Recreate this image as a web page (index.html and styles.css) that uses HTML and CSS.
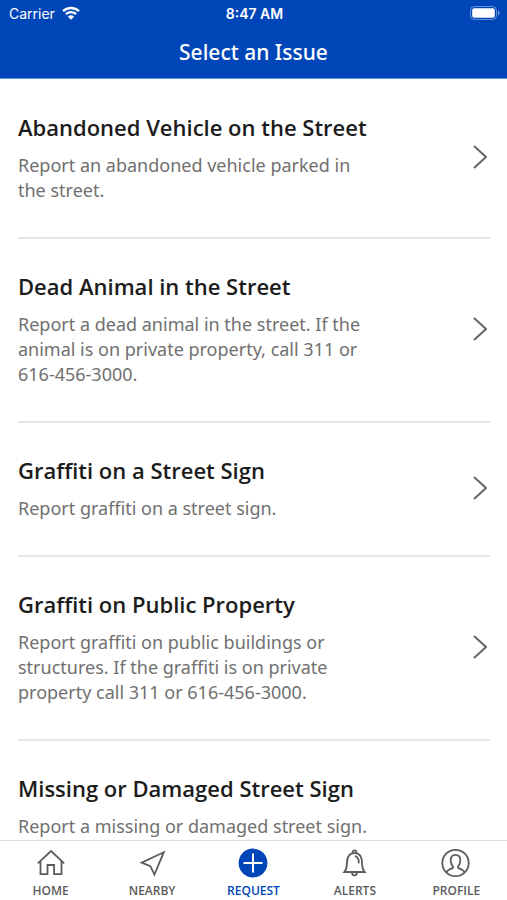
FILE: index.html
```html
<!DOCTYPE html>
<html lang="en">
<head>
<meta charset="utf-8">
<meta name="viewport" content="width=device-width, initial-scale=1">
<title>Select an Issue</title>
<link rel="stylesheet" href="styles.css">
</head>
<body>
<header class="header">
  <div class="status">
    <div class="status-carrier">
      <span>Carrier</span>
      <svg class="wifi" viewBox="0 0 18 14" aria-hidden="true">
        <path d="M1 5.2a11.6 11.6 0 0 1 16 0M3.9 8.2a7.4 7.4 0 0 1 10.2 0" fill="none" stroke="currentColor" stroke-width="2.3"/>
        <path d="M9 13.8 5.9 10.7a4.5 4.5 0 0 1 6.2 0z" fill="currentColor"/>
      </svg>
    </div>
    <span class="status-time">8:47 AM</span>
    <div class="status-battery">
      <svg class="battery" viewBox="0 0 30 14" aria-hidden="true">
        <rect x="0.5" y="0.5" width="26" height="13" rx="4" fill="none" stroke="#fff" stroke-opacity=".4"/>
        <rect x="2.2" y="2.2" width="22.6" height="9.6" rx="2" fill="#fff"/>
        <path d="M28 4.6c2 .8 2 4 0 4.8z" fill="#fff" fill-opacity=".5"/>
      </svg>
    </div>
  </div>
  <h1 class="title">Select an Issue</h1>
</header>
<main class="list">
  <a class="item" href="#vehicle">
    <div class="item-text">
      <h2 class="item-title">Abandoned Vehicle on the Street</h2>
      <p class="item-desc">Report an abandoned vehicle parked in the street.</p>
    </div>
    <svg class="chevron" viewBox="0 0 14 24" aria-hidden="true"><path d="M1 1l12 11L1 23"/></svg>
  </a>
  <a class="item" href="#animal">
    <div class="item-text">
      <h2 class="item-title">Dead Animal in the Street</h2>
      <p class="item-desc">Report a dead animal in the street. If the animal is on private property, call 311 or 616-456-3000.</p>
    </div>
    <svg class="chevron" viewBox="0 0 14 24" aria-hidden="true"><path d="M1 1l12 11L1 23"/></svg>
  </a>
  <a class="item" href="#graffiti-sign">
    <div class="item-text">
      <h2 class="item-title">Graffiti on a Street Sign</h2>
      <p class="item-desc">Report graffiti on a street sign.</p>
    </div>
    <svg class="chevron" viewBox="0 0 14 24" aria-hidden="true"><path d="M1 1l12 11L1 23"/></svg>
  </a>
  <a class="item" href="#graffiti-property">
    <div class="item-text">
      <h2 class="item-title">Graffiti on Public Property</h2>
      <p class="item-desc">Report graffiti on public buildings or structures. If the graffiti is on private property call 311 or 616-456-3000.</p>
    </div>
    <svg class="chevron" viewBox="0 0 14 24" aria-hidden="true"><path d="M1 1l12 11L1 23"/></svg>
  </a>
  <a class="item" href="#sign">
    <div class="item-text">
      <h2 class="item-title">Missing or Damaged Street Sign</h2>
      <p class="item-desc">Report a missing or damaged street sign.</p>
    </div>
  </a>
</main>
<nav class="tabs" aria-label="Main">
  <a class="tab" href="#home">
    <svg class="tab-icon" viewBox="0 0 30 30" aria-hidden="true">
      <path d="M1.800 15.400 15 3l13.200 12.400M4.500 13.200V26.200h7V17h6.600v9.200h7.400V13.200"/>
    </svg>
    <span>HOME</span>
  </a>
  <a class="tab" href="#nearby">
    <svg class="tab-icon" viewBox="0 0 30 30" aria-hidden="true">
      <path d="M26.800 4.200 4.600 14.600l8.800 3.600 4 8.400z"/>
    </svg>
    <span>NEARBY</span>
  </a>
  <a class="tab tab-active" href="#request" aria-current="page">
    <svg class="tab-icon" viewBox="0 0 30 30" aria-hidden="true">
      <circle class="disc" cx="15" cy="15" r="14.400"/>
      <path class="plus" d="M15 5.500v19M5.500 15h19"/>
    </svg>
    <span>REQUEST</span>
  </a>
  <a class="tab" href="#alerts">
    <svg class="tab-icon" viewBox="0 0 30 30" aria-hidden="true">
      <path d="M4.300 24h20.400c-2.200-2.400-2.600-4-2.600-8.200 0-6.600-2-10.600-7.600-10.600s-7.600 4-7.600 10.600c0 4.200-.4 5.800-2.600 8.200z"/>
      <path d="M12.500 5a2 2.600 0 0 1 4 0M12 24.600a2.500 2.800 0 0 0 5 0M15 8.200c2.800.6 3.900 3 3.900 7"/>
    </svg>
    <span>ALERTS</span>
  </a>
  <a class="tab" href="#profile">
    <svg class="tab-icon" viewBox="0 0 30 30" aria-hidden="true">
      <circle cx="14.500" cy="15" r="13.200"/>
      <path d="M5.300 24.400c1-2.200 3-3 6.200-4.200.8-.4.700-1.300.2-2-1.300-1.700-2-3.500-2-6 0-3.600 1.800-5.400 4.800-5.400s4.800 1.800 4.800 5.400c0 2.500-.7 4.300-2 6-.5.700-.6 1.600.2 2 3.200 1.200 5.200 2 6.200 4.200"/>
    </svg>
    <span>PROFILE</span>
  </a>
</nav>
</body>
</html>
```
FILE: styles.css
```css
* {
  box-sizing: border-box;
}

body {
  margin: 0;
  height: 100vh;
  display: flex;
  flex-direction: column;
  background: #fff;
  color: #1c1c1c;
  font-family: "Open Sans", "Noto Sans", sans-serif;
}

h1,
h2,
p {
  margin: 0;
}

a {
  color: inherit;
  text-decoration: none;
}

.header {
  flex: none;
  padding-bottom: 12px;
  background: #0046b8;
  border-bottom: 1px solid #5d95df;
  color: #fff;
}

.status {
  display: grid;
  grid-template-columns: 1fr auto 1fr;
  align-items: center;
  height: 26px;
  padding: 0 7px 0 9px;
  font-family: Inter, sans-serif;
  font-size: 14px;
}

.status-carrier {
  display: flex;
  align-items: center;
  gap: 7px;
}

.wifi {
  width: 18px;
  height: 14px;
}

.status-time {
  font-weight: 600;
}

.status-battery {
  display: flex;
  justify-content: flex-end;
}

.battery {
  width: 30px;
  height: 14px;
}

.title {
  font-family: "Noto Sans", "Open Sans", sans-serif;
  font-size: 21px;
  font-weight: 500;
  line-height: 28px;
  padding-top: 12px;
  text-align: center;
}

.list {
  flex: 1;
  min-height: 0;
  overflow-y: auto;
  scrollbar-width: none;
  padding: 1px 17px 0 18px;
}

.item {
  display: flex;
  align-items: center;
  justify-content: space-between;
  padding: 31px 3px 34px 0;
  border-bottom: 2px solid #e5e5e5;
}

.item-text {
  max-width: 360px;
}

.item-title {
  font-size: 22px;
  font-weight: 600;
  line-height: 32px;
  white-space: nowrap;
}

.item-desc {
  margin-top: 10px;
  color: #707070;
  font-family: "Noto Sans", "Open Sans", sans-serif;
  font-size: 18px;
  line-height: 25px;
}

.chevron {
  flex: none;
  width: 14px;
  height: 24px;
  fill: none;
  stroke: #666;
  stroke-width: 2;
}

.tabs {
  flex: none;
  display: grid;
  grid-template-columns: repeat(5, 1fr);
  border-top: 1px solid #dedede;
  background: #fff;
}

.tab {
  display: flex;
  flex-direction: column;
  align-items: center;
  gap: 5px;
  padding: 7px 0 1px;
  color: #5c5c5c;
  font-size: 12px;
  font-weight: 600;
  line-height: 16px;
}

.tab-active {
  color: #0046b8;
}

.tab-icon {
  width: 30px;
  height: 30px;
  fill: none;
  stroke: currentColor;
  stroke-width: 1.8;
}

.disc {
  fill: #0046b8;
  stroke: none;
}

.plus {
  stroke: #fff;
  stroke-width: 2;
}
```
